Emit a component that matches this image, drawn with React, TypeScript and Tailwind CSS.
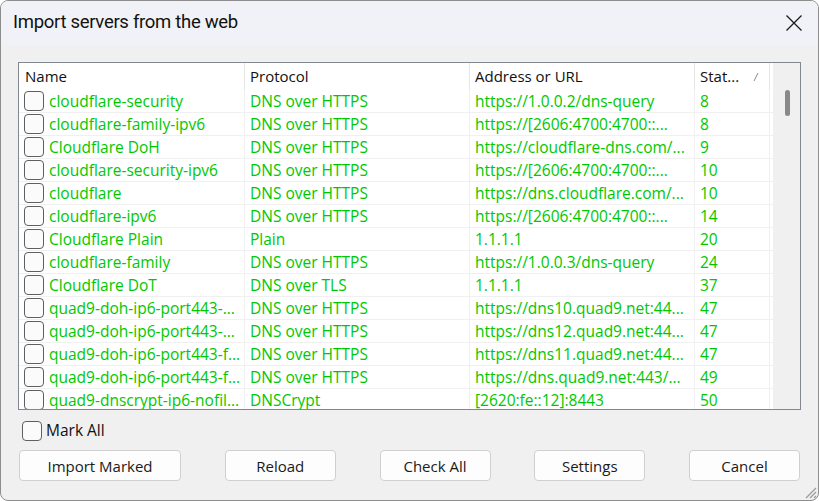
import React from 'react';

type Server = {
  name: string;
  protocol: string;
  address: string;
  stamp: string;
};

const servers: Server[] = [
  { name: 'cloudflare-security', protocol: 'DNS over HTTPS', address: 'https://1.0.0.2/dns-query', stamp: '8' },
  { name: 'cloudflare-family-ipv6', protocol: 'DNS over HTTPS', address: 'https://[2606:4700:4700::...', stamp: '8' },
  { name: 'Cloudflare DoH', protocol: 'DNS over HTTPS', address: 'https://cloudflare-dns.com/...', stamp: '9' },
  { name: 'cloudflare-security-ipv6', protocol: 'DNS over HTTPS', address: 'https://[2606:4700:4700::...', stamp: '10' },
  { name: 'cloudflare', protocol: 'DNS over HTTPS', address: 'https://dns.cloudflare.com/...', stamp: '10' },
  { name: 'cloudflare-ipv6', protocol: 'DNS over HTTPS', address: 'https://[2606:4700:4700::...', stamp: '14' },
  { name: 'Cloudflare Plain', protocol: 'Plain', address: '1.1.1.1', stamp: '20' },
  { name: 'cloudflare-family', protocol: 'DNS over HTTPS', address: 'https://1.0.0.3/dns-query', stamp: '24' },
  { name: 'Cloudflare DoT', protocol: 'DNS over TLS', address: '1.1.1.1', stamp: '37' },
  { name: 'quad9-doh-ip6-port443-...', protocol: 'DNS over HTTPS', address: 'https://dns10.quad9.net:44...', stamp: '47' },
  { name: 'quad9-doh-ip6-port443-...', protocol: 'DNS over HTTPS', address: 'https://dns12.quad9.net:44...', stamp: '47' },
  { name: 'quad9-doh-ip6-port443-f...', protocol: 'DNS over HTTPS', address: 'https://dns11.quad9.net:44...', stamp: '47' },
  { name: 'quad9-doh-ip6-port443-f...', protocol: 'DNS over HTTPS', address: 'https://dns.quad9.net:443/...', stamp: '49' },
  { name: 'quad9-dnscrypt-ip6-nofil...', protocol: 'DNSCrypt', address: '[2620:fe::12]:8443', stamp: '50' },
];

const font = { fontFamily: '"Open Sans", "Noto Sans", sans-serif' };

function Box({ className = '' }: { className?: string }) {
  return (
    <span
      className={`block w-[20px] h-[20px] shrink-0 rounded-[4px] border border-[#5f5f5f] bg-[#fbfbfb] ${className}`}
    />
  );
}

function Button({ label, width }: { label: string; width: string }) {
  return (
    <button
      className={`${width} h-[31px] rounded-[4px] border border-[#d0d0d0] bg-[#fdfdfd] text-[15px] text-[#1a1a1a]`}
    >
      {label}
    </button>
  );
}

export default function App() {
  return (
    <div
      className="w-[819px] h-[501px] flex flex-col overflow-hidden rounded-[8px] border border-[#8e8e8e] bg-[#f0f0f0] relative"
      style={font}
    >
      {/* title bar */}
      <div className="h-[44px] shrink-0 flex items-center justify-between bg-[#f1f2f7] pl-[12px] pr-[14px]">
        <span className="text-[18.5px] text-[#111] tracking-[-0.3px]" style={{ fontFamily: 'Roboto, sans-serif' }}>
          Import servers from the web
        </span>
        <svg width="18" height="18" viewBox="0 0 18 18" className="mr-[1px]">
          <path d="M1.5 1.5 L16.5 16.5 M16.5 1.5 L1.5 16.5" stroke="#1b1b1b" strokeWidth="1.3" />
        </svg>
      </div>

      <div className="flex flex-col pl-[17px] pr-[17px] pt-[17px]">
        {/* server list */}
        <div className="h-[348px] border border-[#828790] bg-white flex overflow-hidden">
          <div className="flex-1 flex flex-col">
            <div className="h-[27px] shrink-0 flex text-[15px] text-[#111]">
              <div className="w-[226px] pl-[6px] border-r border-[#e5e5e5] flex items-center">Name</div>
              <div className="w-[225px] pl-[5px] border-r border-[#e5e5e5] flex items-center">Protocol</div>
              <div className="w-[225px] pl-[5px] border-r border-[#e5e5e5] flex items-center">Address or URL</div>
              <div className="w-[75px] pl-[5px] pr-[10px] border-r border-[#e5e5e5] flex items-center justify-between">
                <span>Stat...</span>
                <svg width="6" height="10" viewBox="0 0 6 10">
                  <path d="M5 1 L1 9" stroke="#8a8a8a" strokeWidth="1" />
                </svg>
              </div>
            </div>
            {servers.map((s, i) => (
              <div key={i} className="h-[23px] shrink-0 flex text-[15.5px] text-[#00c800] border-b border-[#f0f0f0]">
                <div className="w-[226px] pl-[5px] border-r border-[#f0f0f0] flex items-center gap-[5px] whitespace-nowrap">
                  <Box />
                  <span className="pt-[2px]">{s.name}</span>
                </div>
                <div className="w-[225px] pl-[5px] pt-[2px] border-r border-[#f0f0f0] flex items-center whitespace-nowrap">{s.protocol}</div>
                <div className="w-[225px] pl-[5px] pt-[2px] border-r border-[#f0f0f0] flex items-center whitespace-nowrap">{s.address}</div>
                <div className="w-[75px] pl-[5px] pt-[2px] border-r border-[#f0f0f0] flex items-center">{s.stamp}</div>
              </div>
            ))}
          </div>
          {/* vertical scrollbar */}
          <div className="w-[27px] shrink-0 bg-[#f0f0f0] flex justify-center pt-[27px] pl-[2px]">
            <div className="w-[5px] h-[26px] rounded-full bg-[#898989]" />
          </div>
        </div>

        <label className="mt-[9px] flex items-center gap-[4px] pl-[4px] text-[15.5px] text-[#111]">
          <Box />
          <span>Mark All</span>
        </label>

        <div className="mt-[8px] flex justify-between pl-[1px] pr-[1px]">
          <Button label="Import Marked" width="w-[162px]" />
          <Button label="Reload" width="w-[111px]" />
          <Button label="Check All" width="w-[111px]" />
          <Button label="Settings" width="w-[111px]" />
          <Button label="Cancel" width="w-[111px]" />
        </div>
      </div>

      {/* size grip */}
      <svg width="14" height="14" viewBox="0 0 14 14" className="absolute right-[1px] bottom-[1px]">
        <path d="M13 3 L3 13 M13 7 L7 13 M13 11 L11 13" stroke="#9a9a9a" strokeWidth="1.2" />
      </svg>
    </div>
  );
}
